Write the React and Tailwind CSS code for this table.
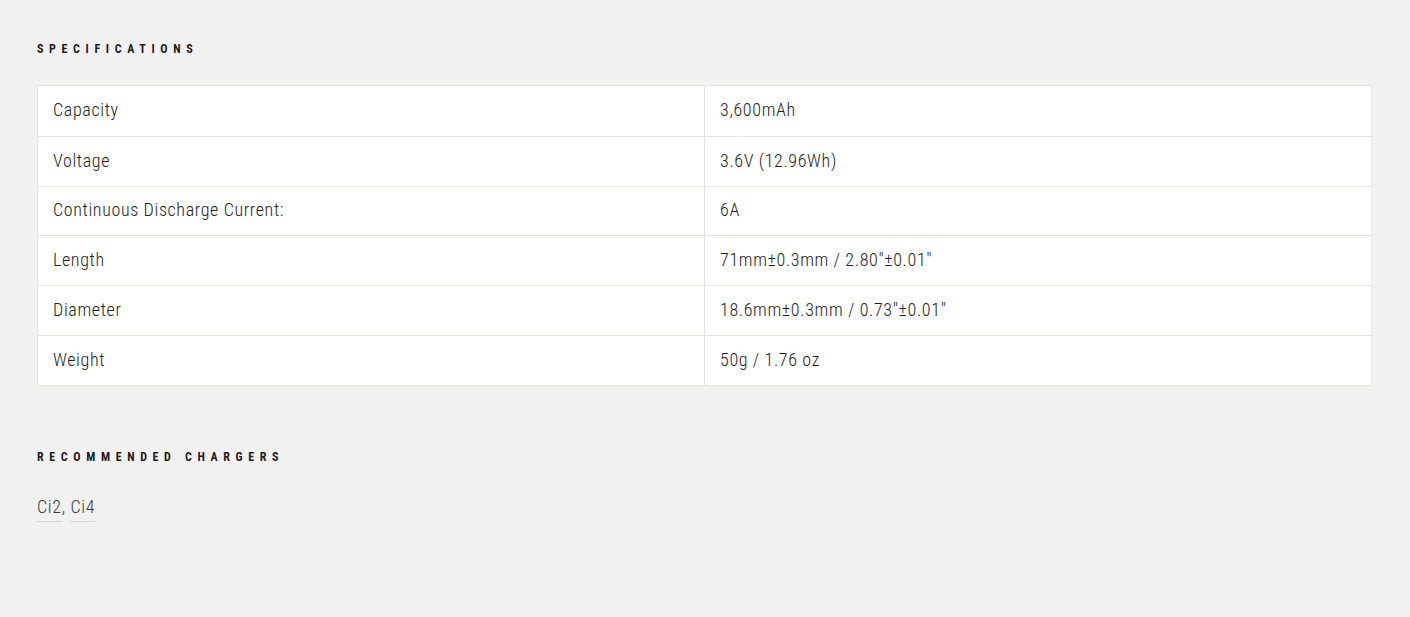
export default function App() {
  const rows = [
    ["Capacity", "3,600mAh"],
    ["Voltage", "3.6V (12.96Wh)"],
    ["Continuous Discharge Current:", "6A"],
    ["Length", "71mm±0.3mm / 2.80\"±0.01\""],
    ["Diameter", "18.6mm±0.3mm / 0.73\"±0.01\""],
    ["Weight", "50g / 1.76 oz"],
  ];
  const font = { fontFamily: '"Roboto Condensed", Roboto, "Liberation Sans", sans-serif' };
  return (
    <div className="w-[1410px] h-[617px] bg-[#f1f1f2] px-[37px] pt-[42px] text-[#222]" style={font}>
      <h2 className="font-stretch-condensed text-[12px] font-bold tracking-[0.47em] leading-[14px] text-[#1d1d1d]">SPECIFICATIONS</h2>
      <div className="mt-[29px] w-[1335px] border border-[#e6e4de] bg-white">
        {rows.map(([k, v], i) => (
          <div key={k} className={"grid grid-cols-[667px_1fr] h-[49.8px] " + (i > 0 ? "border-t border-[#e6e4de]" : "")}>
            <div className="flex items-center pl-[15px] pb-[2px] border-r border-[#e6e4de] text-[18px] font-light tracking-[0.035em] font-stretch-condensed text-[#1e1e1e]">{k}</div>
            <div className="flex items-center pl-[15px] pb-[2px] text-[18px] font-light tracking-[0.035em] font-stretch-condensed text-[#1e1e1e]">{v}</div>
          </div>
        ))}
      </div>
      <h2 className="mt-[64px] font-stretch-condensed text-[12px] font-bold tracking-[0.47em] leading-[14px] text-[#1d1d1d]">RECOMMENDED CHARGERS</h2>
      <div className="mt-[32px] text-[18px] font-light tracking-[0.035em] font-stretch-condensed text-[#3a3a3a] leading-[22px] flex">
        <span className="border-b border-[#d6d6d6] pb-[3px]">Ci2</span>
        <span>,&nbsp;</span>
        <span className="border-b border-[#d6d6d6] pb-[3px]">Ci4</span>
      </div>
    </div>
  );
}
